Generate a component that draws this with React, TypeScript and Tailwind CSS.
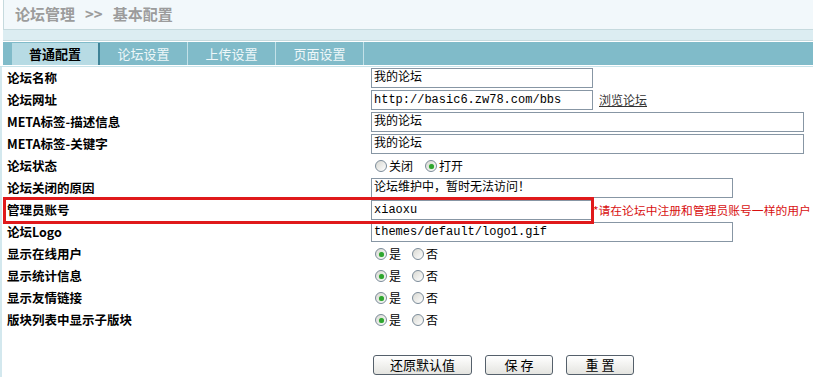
const font = "font-['Noto_Sans_CJK_SC','Noto_Sans',sans-serif]";
const mono = "font-['Liberation_Mono','Noto_Sans_CJK_SC',monospace]";

const tabs = ["普通配置", "论坛设置", "上传设置", "页面设置"];

const Radio = ({ checked, label }: { checked?: boolean; label: string }) => (
  <span className="flex items-center">
    <span className="flex h-[12px] w-[12px] items-center justify-center rounded-full border border-[#7b8b99] bg-gradient-to-br from-[#d8d8d2] to-white">
      {checked && <span className="h-[5px] w-[5px] rounded-full bg-[#2fa52f] shadow-[0_0_1px_#6fd06f]" />}
    </span>
    <span className="ml-[2px] text-[12px] text-black">{label}</span>
  </span>
);

const Input = ({ value, w }: { value: string; w: string }) => (
  <div className={`${w} ${mono} h-[20px] border border-[#8796a4] bg-white pl-[2px] text-[12px] leading-[18px] text-black whitespace-nowrap overflow-hidden`}>
    {value}
  </div>
);

const YesNo = () => (
  <div className="flex items-center gap-[11px] pl-[4px]">
    <Radio checked label="是" />
    <Radio label="否" />
  </div>
);

const rows: { label: string; field: React.ReactNode }[] = [
  { label: "论坛名称", field: <Input value="我的论坛" w="w-[222px]" /> },
  {
    label: "论坛网址",
    field: (
      <div className="flex items-center">
        <Input value="http://basic6.zw78.com/bbs" w="w-[222px]" />
        <span className="ml-[6px] text-[12px] text-[#333] underline">浏览论坛</span>
      </div>
    ),
  },
  { label: "META标签-描述信息", field: <Input value="我的论坛" w="w-[433px]" /> },
  { label: "META标签-关键字", field: <Input value="我的论坛" w="w-[433px]" /> },
  {
    label: "论坛状态",
    field: (
      <div className="flex items-center gap-[12px] pl-[4px]">
        <Radio label="关闭" />
        <Radio checked label="打开" />
      </div>
    ),
  },
  { label: "论坛关闭的原因", field: <Input value="论坛维护中，暂时无法访问！" w="w-[362px]" /> },
  {
    label: "管理员账号",
    field: (
      <div className="flex items-center whitespace-nowrap">
        <Input value="xiaoxu" w="w-[222px]" />
        <span className="text-[11.8px] text-[#d81010]">*请在论坛中注册和管理员账号一样的用户</span>
      </div>
    ),
  },
  { label: "论坛Logo", field: <Input value="themes/default/logo1.gif" w="w-[362px]" /> },
  { label: "显示在线用户", field: <YesNo /> },
  { label: "显示统计信息", field: <YesNo /> },
  { label: "显示友情链接", field: <YesNo /> },
  { label: "版块列表中显示子版块", field: <YesNo /> },
];

const Btn = ({ text, w }: { text: string; w: string }) => (
  <button className={`${w} h-[20px] rounded-[3px] border border-[#55606b] bg-gradient-to-b from-white to-[#e4e4e0] text-[13px] leading-[18px] text-black`}>
    {text}
  </button>
);

export default function App() {
  return (
    <div className={`${font} relative h-[377px] w-[813px] overflow-hidden bg-white`}>
      <div className="ml-[3px] flex h-[30px] items-center gap-[10px] border-b border-l border-[#c6dade] bg-[#f2f8fb] pl-[11px] text-[15px] font-bold text-[#9c9c9c]">
        <span>论坛管理</span>
        <span>&gt;&gt;</span>
        <span>基本配置</span>
      </div>
      <div className="ml-[3px] h-[11px] border-b border-[#c6dade] bg-[#dcedf2]" />
      <div className="h-px" />
      <div className="ml-[3px] flex h-[23px] bg-[#80bbc9] pl-[9px]">
        {tabs.map((t, i) =>
          i === 0 ? (
            <div key={t} className="mt-[1px] flex w-[88px] items-center justify-center border-r-2 border-[#3f8397] bg-[#b7dbe4] text-[13px] font-bold text-black">
              {t}
            </div>
          ) : (
            <div key={t} className="flex w-[88px] items-center justify-center border-r border-[#c3e1e8] text-[13px] text-[#eef7f9]">
              {t}
            </div>
          )
        )}
      </div>
      <div className="h-px" />
      <div className="h-px bg-[#c8e3ea]" />

      <div className="border-l-2 border-[#d3e8ee]">
        {rows.map((r) => (
          <div key={r.label} className="grid h-[22px] grid-cols-[369px_1fr] items-center">
            <div className="pl-[5px] text-[12.5px] font-bold text-black">{r.label}</div>
            <div>{r.field}</div>
          </div>
        ))}
        <div className="grid h-[46px] grid-cols-[369px_1fr] items-end pb-[2px]">
          <div />
          <div className="flex gap-[13px] pl-[2px]">
            <Btn text="还原默认值" w="w-[99px]" />
            <Btn text="保 存" w="w-[68px]" />
            <Btn text="重 置" w="w-[68px]" />
          </div>
        </div>
      </div>

      <div className="pointer-events-none absolute left-[3px] top-[197px] h-[27px] w-[591px] border-[3px] border-[#e0191b]" />
    </div>
  );
}
